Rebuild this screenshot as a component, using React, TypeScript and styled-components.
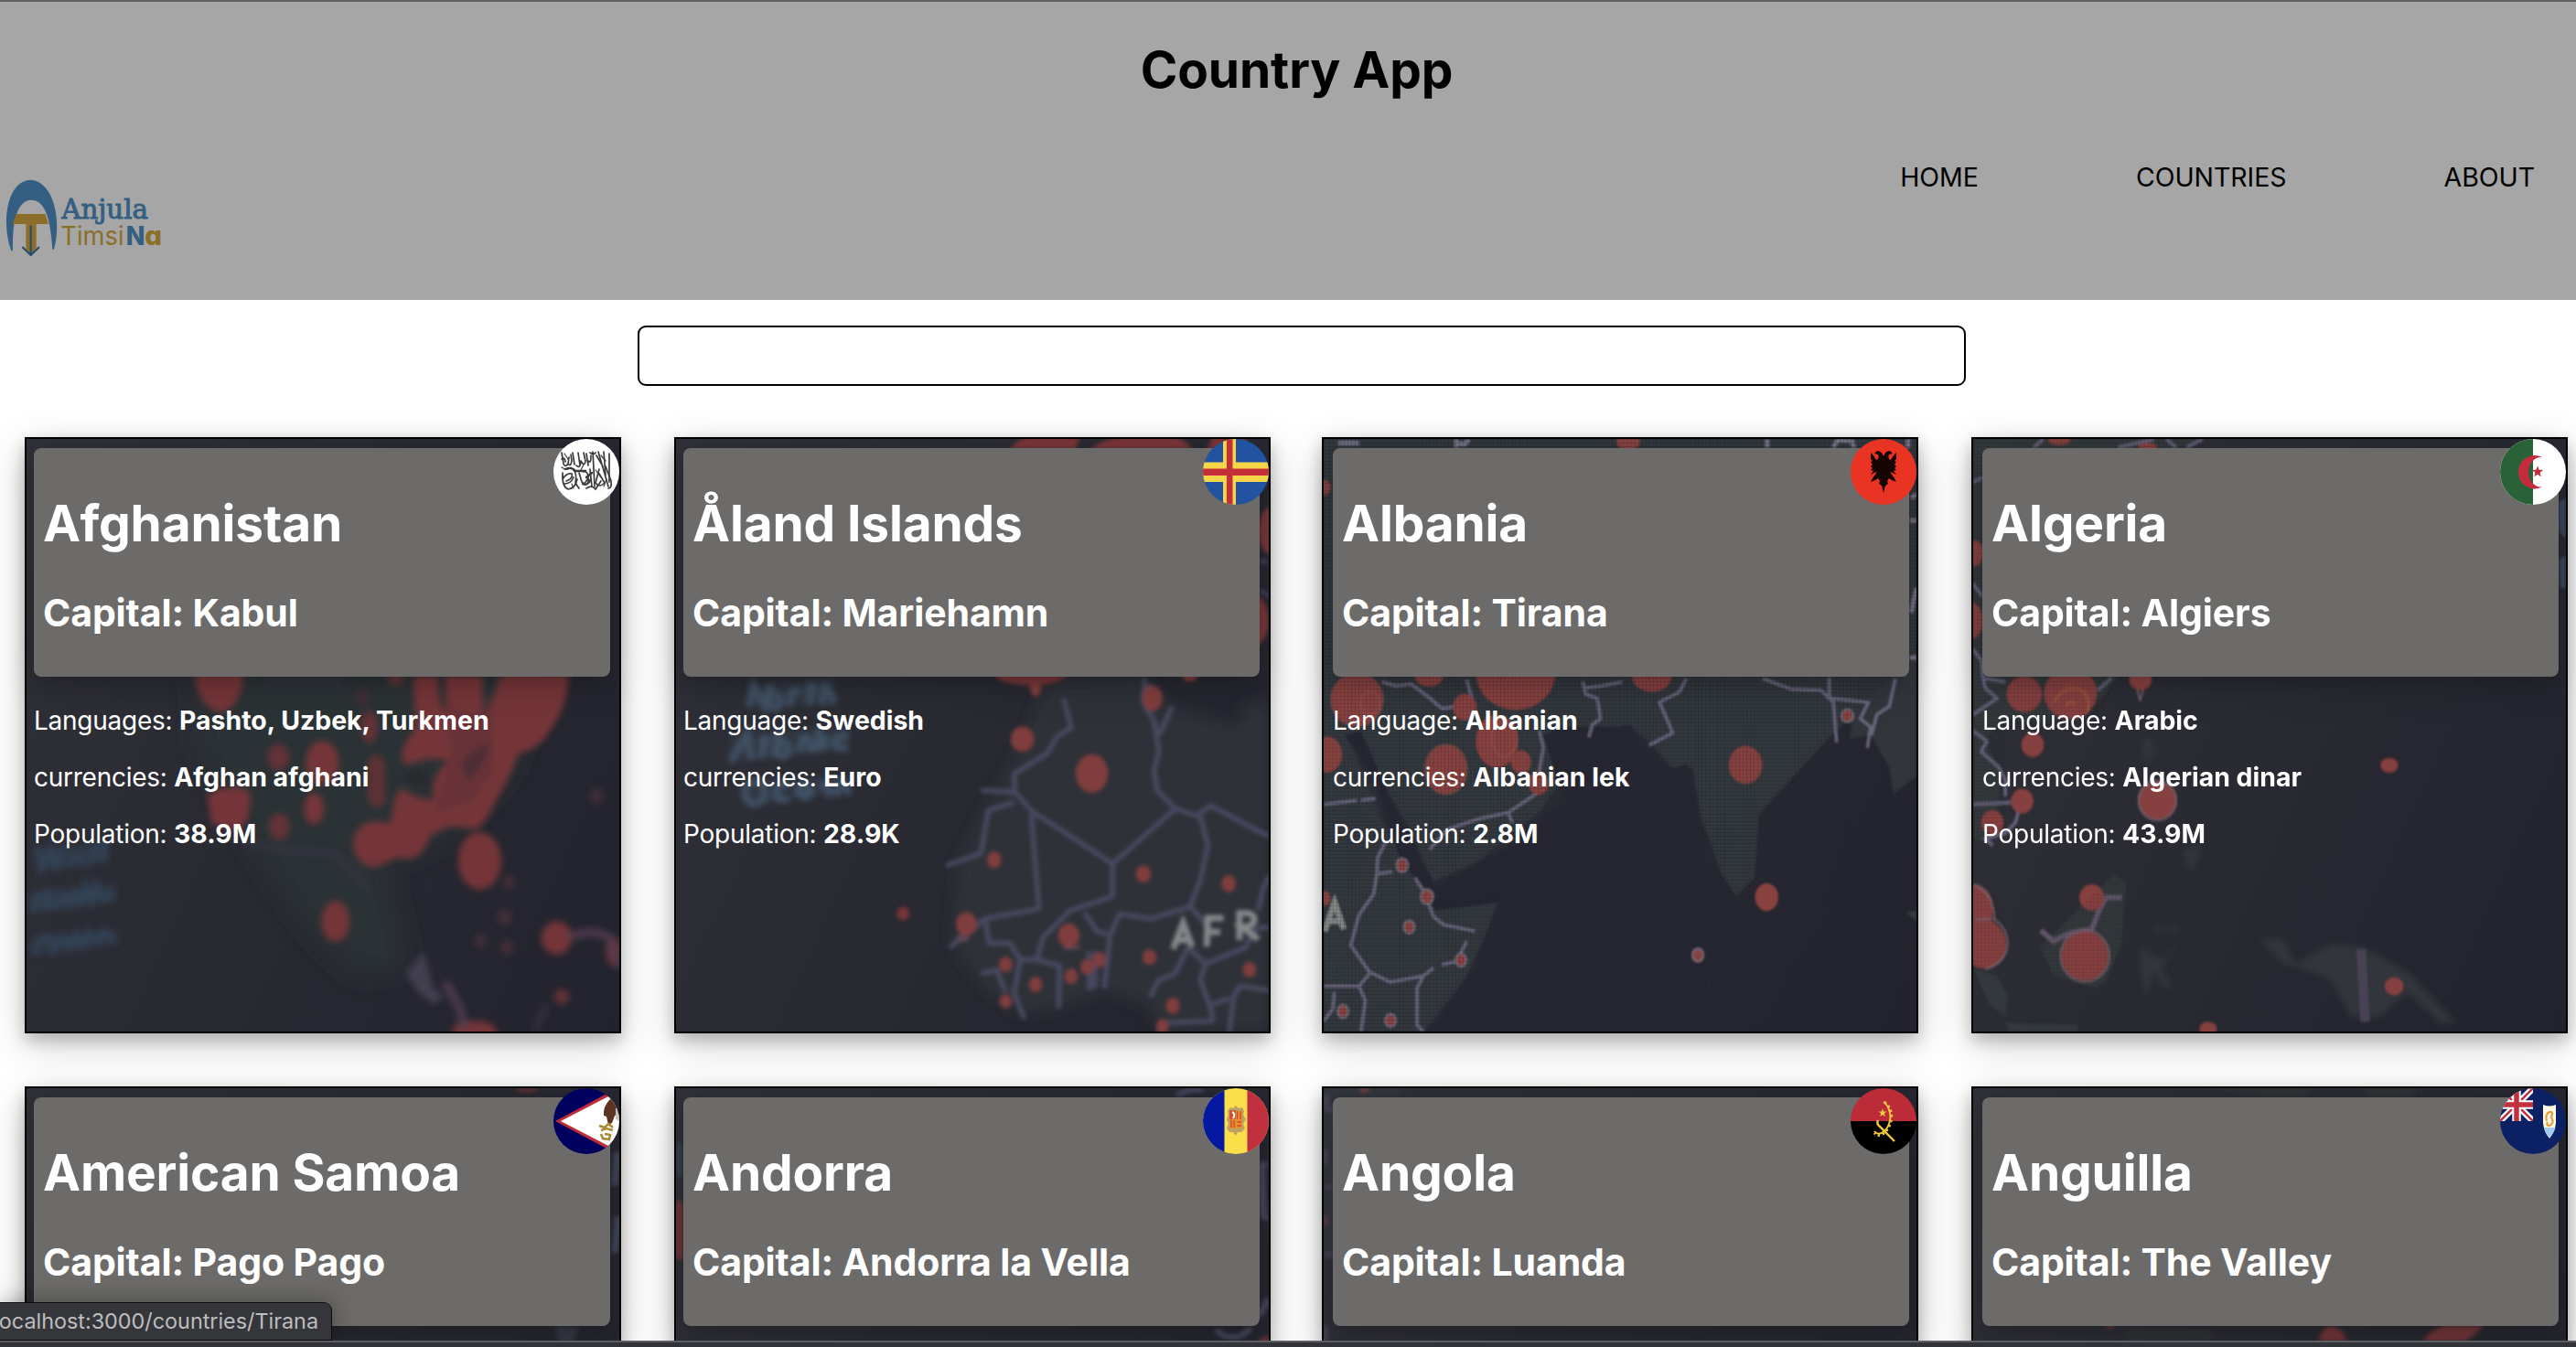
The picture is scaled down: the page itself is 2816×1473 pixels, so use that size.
import React from "react";
import styled, { createGlobalStyle } from "styled-components";

const GlobalStyle = createGlobalStyle`
  *, *::before, *::after { box-sizing: border-box; }
  body {
    margin: 0;
    background: #fff;
    font-family: Inter, "Noto Sans", sans-serif;
  }
`;

const Page = styled.div`
  position: relative;
  display: flex;
  flex-direction: column;
  width: 2816px;
  height: 1473px;
  overflow: hidden;
  background: #fff;
`;

const Header = styled.header`
  display: flex;
  flex-direction: column;
  flex: none;
  height: 328px;
  padding-top: 41px;
  border-top: 2px solid #626266;
  background: #a6a6a6;
`;

const AppTitle = styled.h1`
  margin: 0;
  padding-left: 19px;
  font-size: 55px;
  line-height: 66px;
  font-weight: 700;
  letter-spacing: -0.1px;
  text-align: center;
  color: #000;
`;

const NavBar = styled.div`
  display: flex;
  justify-content: space-between;
  align-items: flex-start;
  padding: 68px 45px 0 0;
`;

const Logo = styled.svg`
  width: 180px;
  height: 90px;
  margin-top: 16px;
`;

const Nav = styled.nav`
  display: flex;
  gap: 172px;
`;

const NavLink = styled.a`
  font-size: 28.5px;
  line-height: 34px;
  letter-spacing: -0.05px;
  color: #000;
  text-decoration: none;
`;

const SearchInput = styled.input`
  flex: none;
  width: 1452px;
  height: 66px;
  margin: 28px 0 56px 697px;
  padding: 0 16px;
  border: 2px solid #000;
  border-radius: 9px;
  background: #fff;
  font: 28px Inter, sans-serif;
  outline: none;
`;

const Grid = styled.main`
  display: grid;
  grid-template-columns: 710px 708px 710px 652px;
  grid-auto-rows: 652px;
  row-gap: 58px;
  padding-left: 27px;
`;

const Card = styled.article<{ $inset: number }>`
  position: relative;
  display: flex;
  flex-direction: column;
  width: 652px;
  height: 652px;
  padding: 10px 0 0 ${(p) => p.$inset}px;
  border: 2px solid #000;
  background: linear-gradient(115deg, #303138 0%, #292a32 45%, #23232e 100%);
  box-shadow: 0 8px 16px rgba(0, 0, 0, 0.2), 0 12px 40px rgba(0, 0, 0, 0.19);
  color: #fff;
`;

const MapArt = styled.svg`
  position: absolute;
  inset: 0;
  width: 648px;
  height: 648px;
`;

const Flag = styled.svg`
  position: absolute;
  top: 0;
  right: 0;
  width: 72px;
  height: 72px;
  border-radius: 50%;
`;

const Panel = styled.div`
  position: relative;
  display: flex;
  flex-direction: column;
  flex: none;
  gap: 40px;
  width: 630px;
  height: 250px;
  padding: 49px 0 0 10px;
  border-radius: 8px;
  background: #6c6b69;
  box-shadow: 0 8px 16px rgba(0, 0, 0, 0.1), 0 12px 40px rgba(0, 0, 0, 0.14);
`;

const CountryName = styled.h2`
  margin: 0;
  font-size: 55px;
  line-height: 66px;
  font-weight: 700;
  letter-spacing: -0.15px;
  white-space: nowrap;
`;

const Capital = styled.h3`
  margin: 0;
  font-size: 41px;
  line-height: 50px;
  font-weight: 700;
  letter-spacing: -0.12px;
  white-space: nowrap;
`;

const Facts = styled.div`
  position: relative;
  display: flex;
  flex-direction: column;
  gap: 28px;
  padding-top: 31px;
`;

const Fact = styled.p`
  margin: 0;
  font-size: 28px;
  line-height: 34px;
  letter-spacing: -0.25px;
  white-space: nowrap;

  strong {
    font-size: 28.4px;
    font-weight: 700;
    letter-spacing: 0.02px;
  }
`;

const StatusBubble = styled.div`
  position: absolute;
  left: 0;
  bottom: 7px;
  display: flex;
  justify-content: flex-end;
  align-items: center;
  width: 363px;
  height: 42px;
  padding: 0 14px 0 0;
  border: 1px solid #0c0c0e;
  border-left: 0;
  border-top-right-radius: 9px;
  background: #35363a;
  box-shadow: 0 0 24px rgba(0, 0, 0, 0.35);
  font-size: 23.4px;
  line-height: 30px;
  letter-spacing: -0.02px;
  color: #bdbdc0;
  white-space: nowrap;
`;

const BottomEdge = styled.div`
  position: absolute;
  left: 0;
  right: 0;
  bottom: 0;
  height: 7px;
  border-top: 2px solid #5c5d62;
  background: #323338;
`;

type Dot = [number, number, number, number];

const Dots = ({ items, fill }: { items: Dot[]; fill: string }) => (
  <g fill={fill}>
    {items.map(([cx, cy, rx, ry], i) => (
      <ellipse key={i} cx={cx} cy={cy} rx={rx} ry={ry} />
    ))}
  </g>
);

const Defs = ({ id, blur }: { id: string; blur: number }) => (
  <defs>
    <filter id={`${id}-b`} x="-20%" y="-20%" width="140%" height="140%">
      <feGaussianBlur stdDeviation={blur} />
    </filter>
    <filter id={`${id}-h`} x="-20%" y="-20%" width="140%" height="140%">
      <feGaussianBlur stdDeviation={blur * 4} />
    </filter>
    <pattern id={`${id}-p`} width="9" height="9" patternUnits="userSpaceOnUse">
      <path d="M0 0H9M0 0V9" stroke="#15161c" strokeWidth="2.4" opacity=".28" />
    </pattern>
  </defs>
);

const AmericasMap = () => (
  <MapArt viewBox="64 45 1431 1451" preserveAspectRatio="none">
    <Defs id="am" blur={8} />
    <path
      filter="url(#am-h)"
      fill="#2c3135"
      d="M470 600H1340L1230 860 1100 1010 930 1090 990 1340 860 1360 740 1240 600 1030 480 800Z"
    />
    <g filter="url(#am-b)">
      <path
        fill="#743637"
        d="M470 620H588C586 668 566 712 532 714 492 708 472 660 470 620ZM1000 625H1055C1062 668 1060 706 1075 712V625H1165V720C1180 705 1195 690 1200 640L1220 620H1372C1374 672 1352 730 1325 762 1300 808 1268 806 1248 820 1236 870 1212 902 1190 945 1170 990 1150 1010 1120 996 1080 990 1062 1000 1036 1020 1022 1068 990 1082 962 1068 940 1080 930 1084 910 1092 880 1100 852 1066 852 1036 856 1000 880 980 902 982L944 985C948 940 956 900 972 902 1000 922 1030 930 1046 928 1040 880 1060 850 1084 834 1040 820 1008 838 976 842 960 820 980 780 1000 760 1010 730 995 700 1000 625Z"
      />
      <path fill="#24252d" opacity=".8" d="M1112 840Q1140 800 1185 790L1160 850 1130 886ZM960 880L1010 850 1045 900Z" />
      <path fill="#5f3238" opacity=".6" d="M1072 625L1090 700 1150 720 1190 660V860L1140 930 1050 960 1090 820Z" />
      <path fill="#743637" d="M500 918Q556 880 604 910 606 985 578 1000 545 1005 510 986Z" />
      <path fill="#5f3136" d="M888 830Q920 800 930 850V935Q910 960 888 930Z" />
      <Dots
        fill="#743637"
        items={[
          [778, 838, 40, 54], [758, 950, 24, 38], [1158, 1078, 52, 70], [810, 1226, 34, 50],
          [1344, 1267, 37, 40], [1145, 1496, 54, 26],
        ]}
      />
      <Dots
        fill="#633238"
        items={[
          [672, 824, 26, 32], [674, 994, 25, 32], [892, 750, 20, 40], [956, 634, 20, 14],
          [1356, 1411, 18, 18], [1482, 1300, 20, 36],
        ]}
      />
      <Dots
        fill="#432d39"
        items={[
          [1228, 1130, 14, 18], [1218, 1216, 18, 20], [1160, 1274, 13, 18],
          [1224, 1290, 16, 18], [1440, 920, 14, 20], [876, 676, 16, 22],
        ]}
      />
      <path
        fill="none"
        stroke="#563f52"
        strokeWidth="22"
        opacity=".75"
        d="M1370 1266Q1440 1240 1474 1270L1495 1340M1074 1375L1110 1440 1120 1490"
      />
      <path fill="#4c4558" opacity=".75" d="M980 1355L1024 1300 1046 1390 1070 1410 1048 1430 1010 1400Z" />
      <path fill="none" stroke="#373344" strokeWidth="20" opacity=".6" d="M590 1035L690 1050 810 1060 890 1150M1320 1430L1290 1496M640 640H830" />
    </g>
    <g filter="url(#am-b)" opacity=".9">
      <path fill="#303f50" opacity=".6" d="M84 1050L262 1030V1080L90 1106ZM66 1160L280 1135V1180L66 1206ZM80 1270L285 1245V1282L80 1312Z" />
      <g stroke="#354960" strokeWidth="16" fill="none" strokeLinecap="round" opacity=".8">
        <path d="M90 1050L100 1095 122 1050 136 1090 150 1052M166 1085Q190 1050 200 1084M220 1080L230 1040M250 1074V1034" />
        <path d="M80 1196L94 1160 120 1156 110 1190 142 1186 150 1160 168 1186 178 1156 194 1180 206 1140 220 1176 232 1136 248 1170 270 1160" />
        <path d="M80 1300L94 1270 120 1262 130 1296 152 1262 170 1290 184 1256 200 1286 214 1252 236 1276 250 1250 272 1270" />
      </g>
    </g>
  </MapArt>
);

const AfricaMap = () => (
  <MapArt viewBox="64 45 1431 1451" preserveAspectRatio="none">
    <Defs id="af" blur={4.5} />
    <path
      filter="url(#af-h)"
      fill="#2d3239"
      d="M960 640L1180 620 1260 700 1420 750 1440 690 1495 690V1496H1240L1200 1430 1100 1395 980 1440 890 1450 800 1380 730 1280 745 1080 810 950 870 850Z"
    />
    <g filter="url(#af-b)">
      <path
        fill="none"
        stroke="#4a4860"
        strokeWidth="12"
        strokeLinejoin="round"
        d="M1000 680L1018 752 985 772 960 815 880 865 882 910 800 905M882 910L925 958 1050 1040 1118 1085 1270 950 1225 905 1218 855 1230 810 1218 735 1192 690 1195 630M1230 770L1262 700M880 935L818 955 800 1060 715 1090M922 965L940 1195 810 1220 725 1290M1118 1085V1165L1015 1200 950 1265 935 1320 990 1335 988 1440M1270 950L1320 968 1355 943 1495 1018M1330 970L1348 1040 1330 1125 1305 1190 1210 1220 1135 1208 1112 1260 1098 1390M1050 1205L1080 1250 1105 1258M810 1220L820 1280 870 1280 895 1320 935 1320M895 1320L880 1400 905 1465M800 1355L838 1345 860 1400M1060 1300L1062 1395M1075 1300V1390M1305 1190L1345 1235M1300 1290L1268 1355 1230 1370 1208 1412M1300 1290L1342 1330 1440 1290 1462 1245 1495 1240M1342 1330L1330 1370 1358 1450 1358 1470 1240 1475M1400 1496L1410 1410 1425 1385 1495 1395M1358 1430L1400 1415M1495 1115L1480 1150 1470 1200"
      />
      <Dots
        fill="#803c3c"
        items={[
          [900, 780, 28, 31], [1068, 864, 39, 47], [1214, 680, 24, 31], [832, 1076, 17, 21],
          [1192, 1110, 18, 21], [1398, 1134, 17, 21], [765, 1233, 25, 29], [1012, 1261, 26, 29],
          [860, 1332, 16, 19], [932, 1381, 16, 19], [1018, 1361, 16, 19], [1056, 1338, 16, 19],
          [1086, 1320, 15, 19], [1207, 1314, 17, 19], [1263, 1433, 17, 20], [1448, 1345, 16, 19],
          [860, 1422, 15, 17], [1238, 1484, 15, 19], [932, 652, 14, 24], [1304, 626, 18, 12],
        ]}
      />
      <Dots fill="#743537" items={[[612, 1207, 15, 17], [920, 620, 88, 28], [1500, 270, 30, 58], [1450, 490, 46, 66]]} />
      <path fill="#783638" d="M868 70Q890 45 910 40H1040L1028 70ZM1060 70Q1100 44 1140 40H1270Q1300 50 1310 70ZM1345 70L1360 40H1440V70Z" />
      <path fill="none" stroke="#6a4a5a" strokeWidth="7" d="M1190 680Q1192 650 1214 648M742 1262Q756 1280 770 1266M1040 1290L1000 1292" />
      <path fill="none" stroke="#4a4860" strokeWidth="8" d="M1474 345H1495M1474 415L1495 430" />
      <g fill="none" stroke="#85888a" strokeWidth="15">
        <path d="M1264 1294L1288 1230 1310 1288M1272 1272H1304M1345 1288L1348 1218H1386M1347 1252H1378M1424 1272V1206H1444Q1462 1210 1460 1226 1454 1240 1430 1240L1470 1270" />
      </g>
    </g>
    <g filter="url(#af-w)" opacity=".85">
      <filter id="af-w">
        <feGaussianBlur stdDeviation="7" />
      </filter>
      <path fill="#33404e" opacity=".55" d="M236 650L450 632 440 690 236 704ZM194 770L480 745 476 806 190 836ZM234 880L478 866 470 910 240 945Z" />
      <g fill="none" stroke="#45596e" strokeWidth="17">
        <path d="M240 700L252 650 278 700 292 646M310 672a14 18 0 1 0 1 1M336 700L344 664 366 662M386 696L392 640M376 660H404M416 696L424 640M418 672Q444 650 442 694" />
        <path d="M196 836L236 766 246 832M270 828L280 770M264 786H290M300 824L312 760M330 790a14 18 0 1 0 1 1M362 812L370 776Q392 772 388 812M404 812L410 752M420 806L426 772M482 772Q440 770 448 796 456 806 480 800" />
        <path d="M262 885a24 28 0 1 0 2 1M336 890Q300 890 306 920 316 934 336 926M356 912H390Q384 884 362 896 350 920 386 924M410 896Q440 886 432 922M452 920L458 886Q484 884 478 918" />
      </g>
    </g>
  </MapArt>
);

const IndiaLand = "M60 45H1491V560L1440 620 1290 765 1110 965 1100 1120 1055 1165 1020 1110 970 970 950 850 900 850 840 780 790 745 700 775 600 770 640 870 580 960 430 1080 320 1130 270 1000 180 850 120 780 200 980 250 1060 320 1170 485 1155 460 1240 400 1370 300 1496H60Z";

const IndiaMap = () => (
  <MapArt viewBox="59.6 45 1431 1451" preserveAspectRatio="none">
    <Defs id="in" blur={2.4} />
    <g filter="url(#in-b)">
      <path fill="#33383d" d={IndiaLand} />
      <path fill="#31363b" d="M1330 780L1380 770 1425 850 1435 915 1491 870V560L1350 640Z" />
      <path fill="#262731" d="M590 770L640 750 760 750 800 745 840 800 900 855 935 840 952 900 970 980 1000 1496H310L420 1340 480 1180 330 1200 240 1060 180 880 110 770 150 760 210 900 330 1140 500 1050 640 930Z" />
      <path
        fill="none"
        stroke="#6a667e"
        strokeWidth="7.500"
        strokeLinejoin="round"
        d="M200 640L235 650 270 645 310 675 345 705 385 700M405 635L420 690M580 760L590 800 580 860 578 910 505 960 435 975 360 1000 315 1050M505 960L515 985M685 640L692 670 720 680 728 730 708 745 700 775M690 655L730 650 780 640M935 632L918 665 870 690 890 735 902 765 845 795M1120 632L1190 658 1260 660 1290 690 1298 788M1280 630V680L1375 690 1355 730 1380 750 1372 802M1440 632L1425 700 1395 720 1382 770M60 940L140 930M150 930L185 925M210 1030L190 1070 188 1110 180 1160 145 1210 125 1285 170 1350 220 1375 300 1360 325 1340M188 1110L225 1105M280 1120L300 1150 325 1215 350 1235 425 1250M345 1332L380 1325 405 1275M170 1355L145 1385 60 1385M145 1385L160 1420 150 1496M300 1360L285 1390 285 1480 300 1496M85 1400L82 1440 60 1470"
      />
      <path fill="none" stroke="#77748a" strokeWidth="10" d="M95 55H145M380 45V66M410 46L400 58 385 56M1130 45V66M1290 66L1300 48 1335 50 1340 66M1470 45V66M1478 190L1491 180M1475 245H1491M1478 470L1491 410M1475 580H1491" />
      <Dots
        fill="#8a433f"
        items={[
          [140, 684, 60, 62], [523, 620, 95, 88], [400, 702, 28, 32], [314, 625, 34, 26],
          [355, 854, 48, 58], [478, 785, 51, 64], [536, 836, 24, 28], [578, 888, 24, 28],
          [66, 818, 38, 44], [852, 624, 48, 40], [1078, 843, 40, 46], [1129, 1167, 28, 34],
          [795, 50, 28, 22], [56, 164, 20, 20], [62, 1170, 14, 18],
        ]}
      />
      <g fill="none" stroke="#9a5450" strokeWidth="3.5" opacity=".8">
        <ellipse cx="172" cy="692" rx="23" ry="28" />
        <ellipse cx="496" cy="778" rx="30" ry="44" />
        <ellipse cx="140" cy="684" rx="62" ry="64" />
        <ellipse cx="355" cy="854" rx="50" ry="60" />
      </g>
      <g stroke="#737080" strokeWidth="4">
        <Dots
          fill="#8a433f"
          items={[
            [249, 1089, 14, 17], [309, 1166, 15, 18], [266, 1240, 13, 16], [391, 1321, 13, 16],
            [106, 1447, 13, 16], [221, 1469, 13, 16], [963, 1309, 13, 16], [1324, 723, 14, 16],
          ]}
        />
      </g>
      <path fill="none" stroke="#858888" strokeWidth="14" d="M62 1250L86 1180 108 1245M70 1226H102" />
      <path fill="#353b41" d="M1464 1205L1491 1200V1224Z" />
    </g>
    <rect x="59" y="45" width="1432" height="1451" fill="url(#in-p)" opacity=".3" />
    <path fill="url(#in-p)" d={IndiaLand} />
  </MapArt>
);

const IndonesiaMap = () => (
  <MapArt viewBox="70.4 45 1472.6 1451" preserveAspectRatio="none">
    <Defs id="id" blur={3} />
    <g filter="url(#id-b)">
      <path fill="#33373b" d="M70 45H640L540 90H92V620H440L380 690 250 740 150 730 100 780 140 860 130 1000 90 1030 70 1020ZM235 1290L300 1225 420 1110 450 1130 440 1280 400 1370 375 1390 270 1360ZM70 1340L130 1360 158 1410 150 1460 110 1430ZM150 1475L330 1480V1496H160Z" />
    </g>
    <g filter="url(#id-s)">
      <filter id="id-s" x="-20%" y="-20%" width="140%" height="140%">
        <feGaussianBlur stdDeviation="7" />
      </filter>
      <path fill="#30353a" d="M490 780H520V830L495 840ZM590 1050L640 1040 620 1100 600 1090ZM485 1290L540 1320 580 1280 540 1340 565 1390 540 1385 520 1350 500 1415 485 1350ZM780 1270L840 1268 870 1330 960 1280 1040 1290 1150 1350 1190 1390 1270 1475 1230 1475 1150 1400 1080 1460 1010 1460 960 1370 880 1340 840 1330ZM520 1240H580V1250H520Z" />
    </g>
    <g filter="url(#id-b)">
      <path
        fill="none"
        stroke="#6a6580"
        strokeWidth="8"
        d="M220 66L245 45M430 66L520 45M550 45L575 66M640 45L600 66M70 150L93 140M70 400L93 430M70 560L92 590 93 620 100 655 130 680 70 720M93 630L150 640M380 660L415 630M70 760L105 785 90 810 135 850 150 880 150 920M70 940L165 935M185 950L175 985 150 1010 100 1025 120 1040"
      />
      <path fill="none" stroke="#62566c" strokeWidth="13" strokeLinejoin="round" d="M440 1168H400L385 1195 365 1245 310 1255 270 1275 238 1248" />
      <path fill="none" stroke="#484355" strokeWidth="24" d="M1034 1294L1044 1472" />
      <Dots
        fill="#87403f"
        items={[
          [197, 670, 44, 44], [312, 668, 66, 64], [486, 634, 28, 26], [218, 794, 28, 30],
          [192, 932, 28, 30], [118, 984, 28, 30], [528, 930, 45, 46], [365, 1168, 31, 32],
          [348, 1311, 58, 60], [70, 1195, 50, 60], [96, 1282, 56, 60], [1104, 844, 22, 18],
          [1116, 1385, 24, 22], [654, 1490, 22, 18], [72, 325, 24, 32], [64, 490, 30, 46],
          [284, 48, 28, 12], [504, 66, 24, 12],
        ]}
      />
      <g fill="none" stroke="#7d6670" strokeWidth="4">
        <ellipse cx="348" cy="1311" rx="61" ry="63" />
        <ellipse cx="528" cy="930" rx="47" ry="48" />
        <path d="M70 1136Q120 1150 124 1222M76 1222L120 1220Q156 1240 156 1284 150 1330 100 1344M478 660L485 684 493 660" />
        <path d="M270 690Q300 640 345 664 366 690 350 720M300 700Q310 680 325 695" stroke="#a5603f" />
      </g>
      <path fill="#46597a" opacity=".6" d="M1524 200L1543 190V290L1526 270ZM1526 340L1543 330V410H1528Z" />
    </g>
    <path
      fill="url(#id-p)"
      opacity=".8"
      d="M70 45H640V66H92V620H440L380 720 150 760 150 1000 70 1030ZM235 1290L300 1225 420 1110 450 1130 440 1280 375 1390 270 1360ZM70 1136Q160 1200 156 1290 130 1340 70 1344Z"
    />
  </MapArt>
);

const LowerMap = ({ variant }: { variant: number }) => (
  <MapArt viewBox="64 60 1431 1944" preserveAspectRatio="none">
    <Defs id={`lw${variant}`} blur={6} />
    <g filter={`url(#lw${variant}-b)`}>
      {variant === 0 && (
        <>
          <path fill="#5a2d35" d="M1245 58H1305L1285 74H1255Z" />
          <path fill="none" stroke="#444a5c" strokeWidth="16" d="M1490 270L1484 380M1492 480L1484 600" />
          <path fill="#363842" d="M1340 840H1400L1380 900H1350Z" />
        </>
      )}
      {variant === 1 && (
        <>
          <path fill="none" stroke="#4a4962" strokeWidth="15" d="M1275 84Q1290 62 1335 66M1495 310H1478L1482 480 1495 490M1495 750L1470 810M1370 850Q1380 880 1415 875 1440 870 1450 846" />
          <path fill="#6b3638" d="M60 430H82V620H60ZM1470 888L1495 868V900H1470Z" />
          <path fill="#39424f" d="M64 240H80V350H64Z" />
        </>
      )}
      {variant === 2 && (
        <>
          <path fill="#33353e" d="M64 60H250L240 88H92V620H64Z" />
          <path fill="#703f44" d="M148 58H178L160 78ZM64 480H72V510H64Z" />
          <path fill="none" stroke="#4b4a5e" strokeWidth="9" d="M70 80V130H92M66 260V310M66 385H88M66 605H88M68 840V890" />
        </>
      )}
      {variant === 3 && (
        <>
          <path fill="#2e3136" d="M640 60H870V86H760ZM1010 60H1130V86H1010ZM430 850H640V890H430Z" />
          <path fill="#713638" d="M900 890Q902 844 930 840 960 850 964 890ZM1150 890Q1170 846 1210 838H1296Q1280 870 1250 890ZM380 838H410L395 852Z" />
        </>
      )}
    </g>
  </MapArt>
);

const star = (cx: number, cy: number, r: number) =>
  Array.from({ length: 10 }, (_, i) => {
    const a = (Math.PI / 5) * i - Math.PI / 2;
    const k = i % 2 ? r * 0.42 : r;
    return `${(cx + Math.cos(a) * k).toFixed(1)},${(cy + Math.sin(a) * k).toFixed(1)}`;
  }).join(" ");

const flags: Record<string, React.ReactNode> = {
  af: (
    <>
      <rect width="72" height="72" fill="#fff" />
      <g fill="none" stroke="#3c3c3c" strokeWidth="1.7" strokeLinecap="round">
        <path d="M9 15L11 27Q13 32 16 27L17 20M16 27Q19 31 20 24L19 17M21 15L23 28M9 22Q12 19 13 25M25 29Q29 33 30 25M27 15L29 29M30 24Q34 31 35 24L33 15M36 16L38 29M38 24Q41 28 41 18M43 14L45 52M49 14L60 52M55 14L57 40M61 16V47M47 18L54 30M40 15Q44 18 46 15" />
        <path d="M10 37Q9 52 16 55 24 54 26 44M10 44Q14 37 20 38 22 43 14 46M22 34Q26 38 24 48L28 54M28 37L31 47Q34 51 37 44M33 36Q39 34 38 48M40 33L42 52M36 54Q42 50 46 55L52 46M50 33L46 48Q50 54 56 48L50 38M57 30L63 46Q64 54 60 54M12 49Q19 49 22 42" />
        <path d="M9 31Q14 35 18 32M52 18L57 24M46 34L52 42M20 49L22 54M55 52L58 44M12 16L16 22M33 28L30 34" strokeWidth="1.2" />
        <path d="M13 33Q20 30 24 35H35" strokeWidth="2.4" />
        <path d="M32 49Q37 52 41 44M42 37L36 42" strokeWidth="2.4" />
      </g>
    </>
  ),
  ax: (
    <>
      <rect width="72" height="72" fill="#2253a0" />
      <path d="M22 0H36V25.500H72V47H36V72H22V47H0V25.500H22Z" fill="#f7d548" />
      <path d="M26 0H32.500V32.500H72V40H32.500V72H26V40H0V32.500H26Z" fill="#c42f39" />
    </>
  ),
  al: (
    <>
      <rect width="72" height="72" fill="#e93323" />
      <path
        d="M36 19Q34 13 29 13L26 16 30 17Q32 21 28 23L25 18 22 15 22 22 24 24 22 25 24 28 22 30 24 32 22 34 25 35 22 39 26 37 29 36 24 43 22 47 27 45 30 43 32 46 31 49 34 51 36 59 38 51 41 49 40 46 42 43 45 45 50 47 48 43 43 36 46 37 50 39 47 35 50 34 48 32 50 30 48 28 50 25 48 24 50 22 50 15 47 18 44 23Q40 21 42 17L46 16 43 13Q38 13 36 19Z"
        fill="#160503"
      />
    </>
  ),
  dz: (
    <>
      <rect width="72" height="72" fill="#fff" />
      <rect width="36" height="72" fill="#2a6238" />
      <path d="M46 20A18 18.200 0 1 0 46 52.500A14 16.300 0 1 1 46 20Z" fill="#c42c3d" />
      <polygon points={star(41, 36, 6.5)} fill="#c42c3d" />
    </>
  ),
  as: (
    <>
      <rect width="72" height="72" fill="#00005f" />
      <path d="M2 36L62 4H72V68H62Z" fill="#bd2c39" />
      <path d="M8 36L62 8 72 4V68L62 64Z" fill="#fff" />
      <path d="M62 12Q54 20 55 30L58 31 60 40 64 38 67 30 72 27V14Z" fill="#5b3320" />
      <path d="M68 22L72 21V36L68 34Z" fill="#c8c0ba" />
      <path d="M50 41L56 43 60 39 65 43M52 46L58 44 65 46M52 50L54 55 61 56 62 51 56 50" fill="none" stroke="#a98a35" strokeWidth="2.600" />
    </>
  ),
  ad: (
    <>
      <rect width="72" height="72" fill="#fbde4a" />
      <rect width="23.500" height="72" fill="#0518a0" />
      <rect x="48.500" width="23.500" height="72" fill="#c1303f" />
      <path d="M36 19L39 22 43 21 45 25 44 29 47 34 44 39 46 44 42 48 38 48 36 52 33 48 29 48 26 44 28 39 26 34 28 29 27 25 30 21 33 22Z" fill="#bda066" />
      <rect x="29.500" y="25" width="13" height="19" fill="#e8902c" />
      <path d="M30 25H35V33H30ZM37.500 25V34M41 25V34M31 35V43M34 35V43M37.500 37H42M37.500 41H42" fill="#d44a3a" stroke="#cc4432" strokeWidth="1.300" />
      <path d="M32 26Q36 28 33 33" stroke="#fff" strokeWidth="2" fill="none" />
    </>
  ),
  ao: (
    <>
      <rect width="72" height="36" fill="#bb2b38" />
      <rect y="36" width="72" height="36" fill="#000" />
      <path d="M36 15Q43 20 43.500 32 42 45 34 49 29 51 26 47" fill="none" stroke="#f2c83f" strokeWidth="2" />
      <path d="M37 15Q45 21 45 32 43 46 34 51 29 53 26 49" fill="none" stroke="#f2c83f" strokeWidth="2.600" strokeDasharray="2.500 3" />
      <path d="M30 35Q28 39 32 42L48 58" fill="none" stroke="#f2c83f" strokeWidth="2.400" />
      <polygon points={star(35, 27, 4.8)} fill="#f2c83f" />
    </>
  ),
  ai: (
    <>
      <rect width="72" height="72" fill="#0c2164" />
      <svg width="36" height="36" viewBox="0 0 36 36">
        <path d="M0 36L36 0M0 0L36 36" stroke="#fff" strokeWidth="7" />
        <path d="M0 36L36 0M0 0L36 36" stroke="#c22f3d" strokeWidth="2.400" />
        <path d="M18 0V36M0 18H36" stroke="#fff" strokeWidth="9.500" />
        <path d="M18 0V36M0 18H36" stroke="#c22f3d" strokeWidth="5.500" />
      </svg>
      <path d="M47 18Q54 21 61 18V38Q60 48 54 55 48 48 47 38Z" fill="#fdfbe8" />
      <path d="M48 43H60.500Q59 49 54 54 49 49 48 43Z" fill="#a3cbf0" />
      <path d="M51 36Q49 28 54 26 59 25 56 32 60 38 54 41 50 41 52 37" fill="none" stroke="#eb9a3c" strokeWidth="2.200" />
    </>
  ),
};

interface Country {
  code: string;
  name: string;
  capital: string;
  facts: [string, string][];
  map: React.ReactNode;
}

const countries: Country[] = [
  { code: "af", name: "Afghanistan", capital: "Kabul", map: <AmericasMap />, facts: [["Languages", "Pashto, Uzbek, Turkmen"], ["currencies", "Afghan afghani"], ["Population", "38.9M"]] },
  { code: "ax", name: "Åland Islands", capital: "Mariehamn", map: <AfricaMap />, facts: [["Language", "Swedish"], ["currencies", "Euro"], ["Population", "28.9K"]] },
  { code: "al", name: "Albania", capital: "Tirana", map: <IndiaMap />, facts: [["Language", "Albanian"], ["currencies", "Albanian lek"], ["Population", "2.8M"]] },
  { code: "dz", name: "Algeria", capital: "Algiers", map: <IndonesiaMap />, facts: [["Language", "Arabic"], ["currencies", "Algerian dinar"], ["Population", "43.9M"]] },
  { code: "as", name: "American Samoa", capital: "Pago Pago", map: <LowerMap variant={0} />, facts: [] },
  { code: "ad", name: "Andorra", capital: "Andorra la Vella", map: <LowerMap variant={1} />, facts: [] },
  { code: "ao", name: "Angola", capital: "Luanda", map: <LowerMap variant={2} />, facts: [] },
  { code: "ai", name: "Anguilla", capital: "The Valley", map: <LowerMap variant={3} />, facts: [] },
];

const LogoWord = styled.text<{ $serif?: boolean; $weight?: number }>`
  font-family: ${(p) => (p.$serif ? '"DejaVu Serif", serif' : "Inter, sans-serif")};
  font-size: ${(p) => (p.$serif ? 89 : 85)}px;
  font-weight: ${(p) => p.$weight ?? 400};
  font-feature-settings: "cv11";
`;

const BrandLogo = () => (
  <Logo viewBox="0 580 540 270">
    <path
      fill="#345f82"
      d="M37 824C8 745 18 632 70 600Q100 582 130 600C186 636 198 742 177 819H172C166 745 158 657 101 657C52 660 40 740 42 824Z"
    />
    <path fill="#8c6e28" d="M54 703H149L159 736H119V818L101 838 85 818V736H41Z" />
    <path fill="none" stroke="#264d6b" strokeWidth="6.500" d="M101 741V838M73 811L101 838 129 811" />
    <LogoWord $serif x="202" y="717" textLength="284" lengthAdjust="spacingAndGlyphs" fill="#345f82" stroke="#345f82" strokeWidth="3">Anjula</LogoWord>
    <LogoWord $weight={400} x="199" y="804" textLength="208" lengthAdjust="spacingAndGlyphs" fill="#8c6e28">Timsi</LogoWord>
    <LogoWord $weight={800} x="413" y="805" textLength="62" lengthAdjust="spacingAndGlyphs" fill="#345f82">N</LogoWord>
    <LogoWord $weight={800} x="475" y="805" textLength="56" lengthAdjust="spacingAndGlyphs" fill="#8c6e28">a</LogoWord>
  </Logo>
);

export default function App() {
  return (
    <Page>
      <GlobalStyle />
      <Header>
        <AppTitle>Country App</AppTitle>
        <NavBar>
          <BrandLogo />
          <Nav>
            <NavLink>HOME</NavLink>
            <NavLink>COUNTRIES</NavLink>
            <NavLink>ABOUT</NavLink>
          </Nav>
        </NavBar>
      </Header>
      <SearchInput aria-label="Search" />
      <Grid>
        {countries.map((c, i) => (
          <Card key={c.code} $inset={i % 4 < 2 ? 8 : 10}>
            {c.map}
            <Panel>
              <CountryName>{c.name}</CountryName>
              <Capital>Capital: {c.capital}</Capital>
            </Panel>
            <Facts>
              {c.facts.map(([label, value]) => (
                <Fact key={label}>
                  {label}: <strong>{value}</strong>
                </Fact>
              ))}
            </Facts>
            <Flag viewBox="0 0 72 72">{flags[c.code]}</Flag>
          </Card>
        ))}
      </Grid>
      <StatusBubble>ocalhost:3000/countries/Tirana</StatusBubble>
      <BottomEdge />
    </Page>
  );
}
